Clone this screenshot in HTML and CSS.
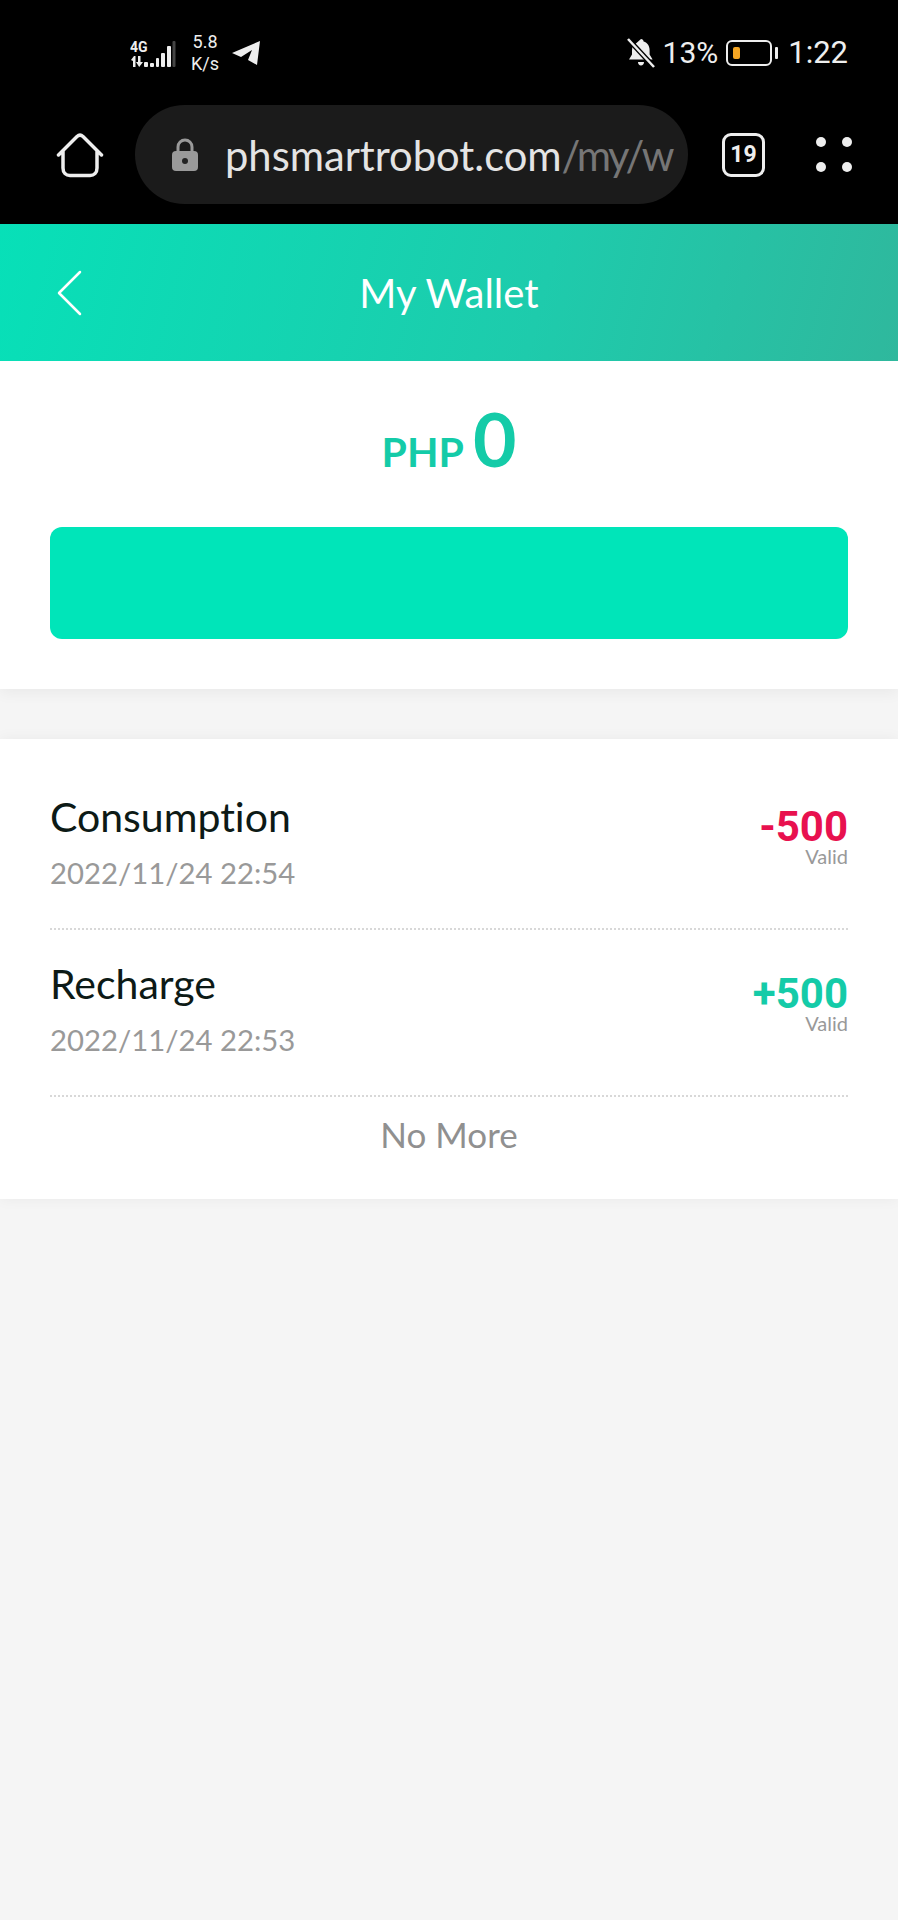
FILE: index.html
```html
<!DOCTYPE html>
<html lang="en">

<head>
  <meta charset="UTF-8">
  <meta name="viewport" content="width=device-width, initial-scale=1.0">
  <title>My Wallet</title>
  <link rel="stylesheet" href="styles.css">
</head>

<body>
  <section class="phone-top">
    <div class="status-bar">
      <div class="status-left">
        <svg class="signal" width="46" height="32" viewBox="0 0 46 32">
          <g fill="#eee">
            <rect x="26" y="21" width="3" height="9" rx="1" />
            <rect x="14" y="25" width="4" height="5" rx="1" />
            <rect x="20" y="26" width="4" height="4" rx="1" />
            <rect x="31" y="16" width="4" height="14" rx="1" />
            <rect x="37" y="9" width="4" height="21" rx="1" />
            <path d="M1 23l3-4h1.500v11H3v-6zM8 19h2.500v6H13l-3.800 5-3.200-5h2z" />
          </g>
          <rect x="42.500" y="4" width="3" height="26" rx="1" fill="#444" />
          <text x="0" y="15" class="signal-text">4G</text>
        </svg>
        <div class="speed">5.8<br>K/s</div>
        <svg class="telegram" width="30" height="26" viewBox="0 0 30 26">
          <path d="M1 13L29 1 26 25 17 20 21 10 10 17z" fill="#eee" />
        </svg>
      </div>
      <div class="status-right">
        <svg class="bell" width="30" height="32" viewBox="0 0 30 32">
          <path d="M15 2c1.500 0 2.500 1 2.600 2.500 4 1.300 6 4.500 6 9v4l3 5H3l3-5v-4c0-1.500.3-3 .8-4.200zM12 25h6c0 2-1.300 3.500-3 3.500S12 27 12 25z" fill="#eee" />
          <path d="M3 3l25 27" stroke="#000" stroke-width="5" />
          <path d="M2 2l26 28" stroke="#eee" stroke-width="2.500" />
        </svg>
        <span class="status-text">13%</span>
        <div class="battery">
          <div class="battery-body">
            <div class="battery-level"></div>
          </div>
          <div class="battery-cap"></div>
        </div>
        <span class="status-text time">1:22</span>
      </div>
    </div>

    <div class="browser-bar">
      <svg class="home" width="48" height="46" viewBox="0 0 48 46">
        <path d="M2.500 23L21 4.500c1.800-1.700 4.200-1.700 6 0L45.500 23M7 19v17c0 5 3 7.500 7 7.500h20c4 0 7-2.500 7-7.500V19" fill="none" stroke="#eee" stroke-width="3.500" stroke-linecap="round" stroke-linejoin="round" />
      </svg>
      <div class="url-pill">
        <svg class="lock" width="26" height="33" viewBox="0 0 26 33">
          <path d="M6 14V9a7 7 0 0 1 14 0v5" fill="none" stroke="#9a9a9a" stroke-width="3" />
          <rect x="0" y="13" width="26" height="20" rx="4" fill="#9a9a9a" />
          <circle cx="13" cy="23" r="3" fill="#222" />
        </svg>
        <div class="url"><span class="url-host">phsmartrobot.com</span><span class="url-path">/my/w</span></div>
      </div>
      <div class="tabs">19</div>
      <div class="menu-dots">
        <span></span><span></span><span></span><span></span>
      </div>
    </div>
  </section>

  <header class="page-header">
    <svg class="back" width="26" height="46" viewBox="0 0 26 46">
      <path d="M24 2L3 23l21 21" fill="none" stroke="#fff" stroke-width="2.500" stroke-linecap="round" stroke-linejoin="round" />
    </svg>
    <h1 class="page-title">My Wallet</h1>
  </header>

  <section class="balance">
    <div class="balance-value"><span class="currency">PHP</span><span class="amount">0</span></div>
    <div class="balance-button"></div>
  </section>

  <section class="records">
    <div class="record">
      <div>
        <div class="record-title">Consumption</div>
        <div class="record-date">2022/11/24 22:54</div>
      </div>
      <div class="record-side">
        <div class="record-amount minus">-500</div>
        <div class="record-status">Valid</div>
      </div>
    </div>
    <div class="record">
      <div>
        <div class="record-title">Recharge</div>
        <div class="record-date">2022/11/24 22:53</div>
      </div>
      <div class="record-side">
        <div class="record-amount plus">+500</div>
        <div class="record-status">Valid</div>
      </div>
    </div>
    <div class="no-more">No More</div>
  </section>
</body>

</html>
```

FILE: styles.css
```css
body {
  margin: 0;
  width: 898px;
  height: 1920px;
  overflow: hidden;
  background-color: #f5f5f5;
  font-family: "Lato", "Liberation Sans", sans-serif;
  font-variant-ligatures: none;
}

.phone-top {
  height: 224px;
  background-color: #000;
}

.status-bar {
  display: flex;
  justify-content: space-between;
  align-items: center;
  height: 105px;
  padding: 0 50px 0 130px;
  box-sizing: border-box;
  color: #eee;
}

.status-left,
.status-right {
  display: flex;
  align-items: center;
}

.signal-text {
  font-family: "Roboto", sans-serif;
  font-size: 14px;
  font-weight: 700;
  fill: #eee;
}

.speed {
  margin-left: 15px;
  font-family: "Roboto", sans-serif;
  font-size: 18px;
  line-height: 22px;
  text-align: center;
}

.telegram {
  margin-left: 12px;
}

.bell {
  margin-right: 7px;
}

.status-text {
  font-family: "Roboto", sans-serif;
  font-size: 30px;
  font-weight: 400;
}

.time {
  font-size: 31px;
}

.battery {
  display: flex;
  align-items: center;
  margin: 0 10px 0 8px;
}

.battery-body {
  display: flex;
  width: 46px;
  height: 26px;
  padding: 4px;
  box-sizing: border-box;
  border: 2px solid #eee;
  border-radius: 6px;
}

.battery-level {
  width: 7px;
  margin: 1px 0 1px 1px;
  background-color: #f5a623;
  border-radius: 2px;
}

.battery-cap {
  width: 3px;
  height: 12px;
  margin-left: 3px;
  background-color: #eee;
  border-radius: 1px;
}

.browser-bar {
  display: flex;
  align-items: center;
  height: 99px;
  padding-left: 56px;
}

.home {
  flex: none;
}

.url-pill {
  display: flex;
  align-items: center;
  width: 553px;
  height: 99px;
  margin-left: 31px;
  padding: 0 19px 0 37px;
  box-sizing: border-box;
  background-color: #1b1b1b;
  border-radius: 50px;
}

.lock {
  flex: none;
}

.url {
  margin-left: 27px;
  font-size: 41.7px;
  white-space: nowrap;
}

.url-host {
  color: #e4e4e4;
}

.url-path {
  color: #767676;
  letter-spacing: -2.5px;
}

.tabs {
  width: 43px;
  height: 44px;
  margin-left: 34px;
  box-sizing: border-box;
  border: 3px solid #eee;
  border-radius: 9px;
  color: #eee;
  font-family: "Roboto", sans-serif;
  font-size: 23px;
  font-weight: 700;
  line-height: 38px;
  text-align: center;
}

.menu-dots {
  display: grid;
  grid-template-columns: 10px 10px;
  gap: 15px 16px;
  margin-left: 51px;
}

.menu-dots span {
  width: 10px;
  height: 10px;
  background-color: #eee;
  border-radius: 50%;
}

.page-header {
  display: flex;
  align-items: center;
  justify-content: center;
  position: relative;
  height: 137px;
  background: linear-gradient(105deg, #07e0b8 0%, #1ecbac 60%, #2fb89d 100%);
}

.back {
  position: absolute;
  left: 56px;
  top: 46px;
}

.page-title {
  margin: 0;
  color: #fff;
  font-size: 40px;
  font-weight: 400;
}

.balance {
  height: 328px;
  box-sizing: border-box;
  padding: 32px 50px 0;
  background-color: #fff;
  box-shadow: 0 4px 14px rgba(0, 0, 0, 0.05);
}

.balance-value {
  display: flex;
  justify-content: center;
  align-items: baseline;
  height: 134px;
  color: #14cba8;
  font-weight: 700;
}

.currency {
  font-size: 41px;
}

.amount {
  margin-left: 9px;
  font-size: 75px;
  line-height: 90px;
}

.balance-button {
  height: 112px;
  background-color: #00e5b9;
  border-radius: 12px;
}

.records {
  height: 460px;
  box-sizing: border-box;
  margin-top: 50px;
  padding: 24px 50px 0;
  background-color: #fff;
  box-shadow: 0 0 14px rgba(0, 0, 0, 0.05);
}

.record {
  display: flex;
  justify-content: space-between;
  height: 167px;
  box-sizing: border-box;
  padding-top: 31px;
  border-bottom: 2px dotted #d8d8d8;
}

.record-title {
  color: #0d1a16;
  font-size: 41px;
  line-height: 46px;
}

.record-date {
  margin-top: 15px;
  color: #999;
  font-size: 29.3px;
  line-height: 36px;
}

.record-side {
  text-align: right;
}

.record-amount {
  margin-top: 15px;
  font-family: "Roboto", sans-serif;
  font-size: 42px;
  font-weight: 700;
  line-height: 36px;
}

.minus {
  color: #e8114f;
}

.plus {
  color: #14cba8;
}

.record-status {
  color: #999;
  font-size: 20px;
  line-height: 22px;
}

.no-more {
  margin-top: 12px;
  color: #909090;
  font-size: 35px;
  line-height: 50px;
  text-align: center;
}
```
